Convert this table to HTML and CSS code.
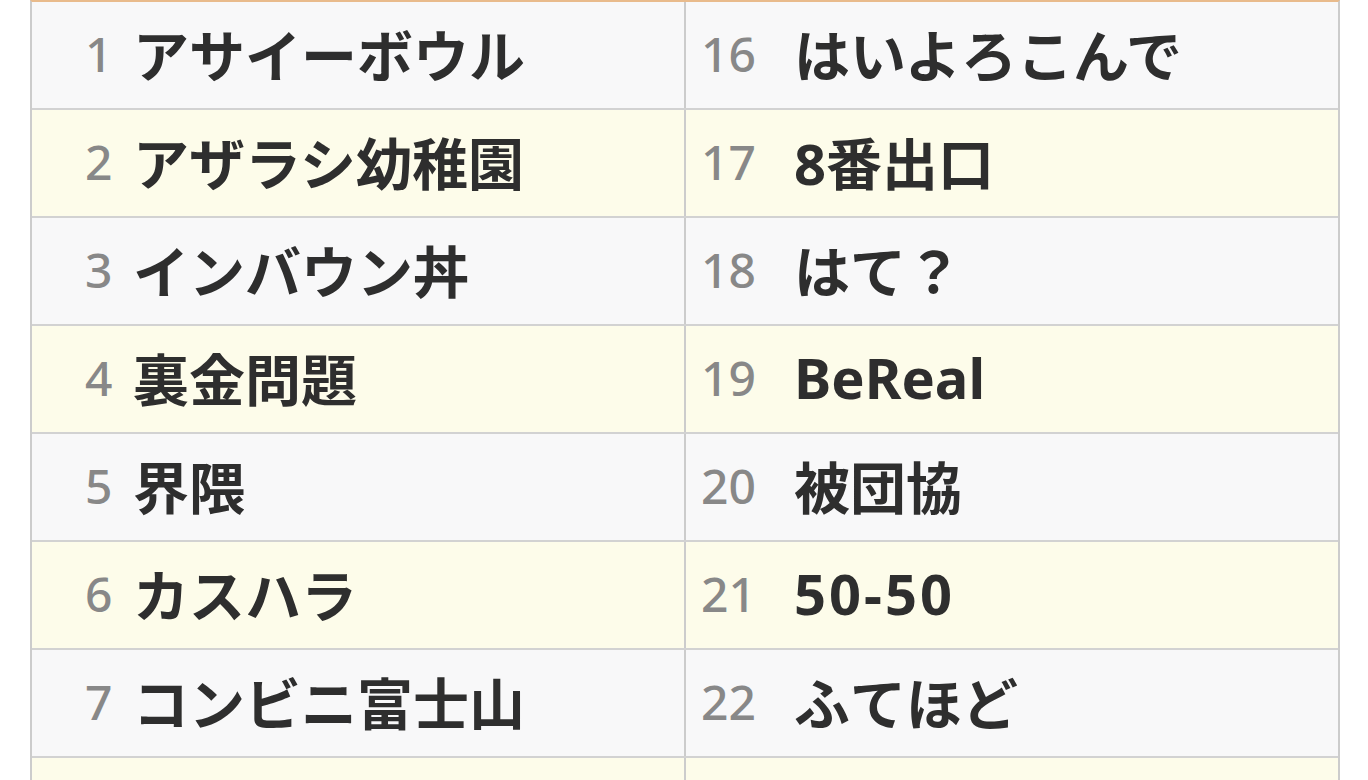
FILE: index.html
```html
<!DOCTYPE html>
<html lang="ja">
<head>
<meta charset="utf-8">
<title>流行語</title>
<link rel="stylesheet" href="styles.css">
</head>
<body>
<div class="table">
  <div class="row odd">
    <div class="cell left"><span class="num">1</span><span class="word">アサイーボウル</span></div>
    <div class="cell right"><span class="num">16</span><span class="word">はいよろこんで</span></div>
  </div>
  <div class="row even">
    <div class="cell left"><span class="num">2</span><span class="word">アザラシ幼稚園</span></div>
    <div class="cell right"><span class="num">17</span><span class="word">8番出口</span></div>
  </div>
  <div class="row odd">
    <div class="cell left"><span class="num">3</span><span class="word">インバウン丼</span></div>
    <div class="cell right"><span class="num">18</span><span class="word">はて？</span></div>
  </div>
  <div class="row even">
    <div class="cell left"><span class="num">4</span><span class="word">裏金問題</span></div>
    <div class="cell right"><span class="num">19</span><span class="word">BeReal</span></div>
  </div>
  <div class="row odd">
    <div class="cell left"><span class="num">5</span><span class="word">界隈</span></div>
    <div class="cell right"><span class="num">20</span><span class="word">被団協</span></div>
  </div>
  <div class="row even">
    <div class="cell left"><span class="num">6</span><span class="word">カスハラ</span></div>
    <div class="cell right"><span class="num">21</span><span class="word wide">50-50</span></div>
  </div>
  <div class="row odd">
    <div class="cell left"><span class="num">7</span><span class="word">コンビニ富士山</span></div>
    <div class="cell right"><span class="num">22</span><span class="word">ふてほど</span></div>
  </div>
  <div class="row even">
    <div class="cell left"></div>
    <div class="cell right"></div>
  </div>
</div>
</body>
</html>
```
FILE: styles.css
```css
html, body {
  margin: 0;
  padding: 0;
  background: #ffffff;
}

body {
  font-family: "Noto Sans", "Noto Sans CJK JP", sans-serif;
  overflow: hidden;
}

.table {
  box-sizing: border-box;
  width: 1310px;
  margin-left: 30px;
  border-top: 2px solid #e9bb8c;
  border-left: 2px solid #cccccc;
  border-right: 2px solid #cccccc;
}

.row {
  display: grid;
  grid-template-columns: 654px 1fr;
  height: 108px;
  box-sizing: border-box;
  border-bottom: 2px solid #d2d2d2;
}

.row.odd {
  background: #f8f8f9;
}

.row.even {
  background: #fdfcea;
}

.cell {
  display: flex;
  align-items: center;
  box-sizing: border-box;
  padding-bottom: 5px;
}

.cell.left {
  border-right: 2px solid #cccccc;
  padding-left: 53px;
}

.cell.right {
  padding-left: 15px;
}

.num {
  font-family: "Noto Sans", sans-serif;
  font-size: 48px;
  font-weight: 500;
  color: #888888;
  flex: none;
  position: relative;
  top: 1px;
}

.left .num {
  width: 48px;
}

.right .num {
  width: 93px;
}

.word {
  font-family: "Noto Sans", "Noto Sans CJK JP", sans-serif;
  font-size: 56px;
  font-weight: 700;
  color: #2e2e2e;
  white-space: nowrap;
}

.word.wide {
  letter-spacing: 3px;
}
```
